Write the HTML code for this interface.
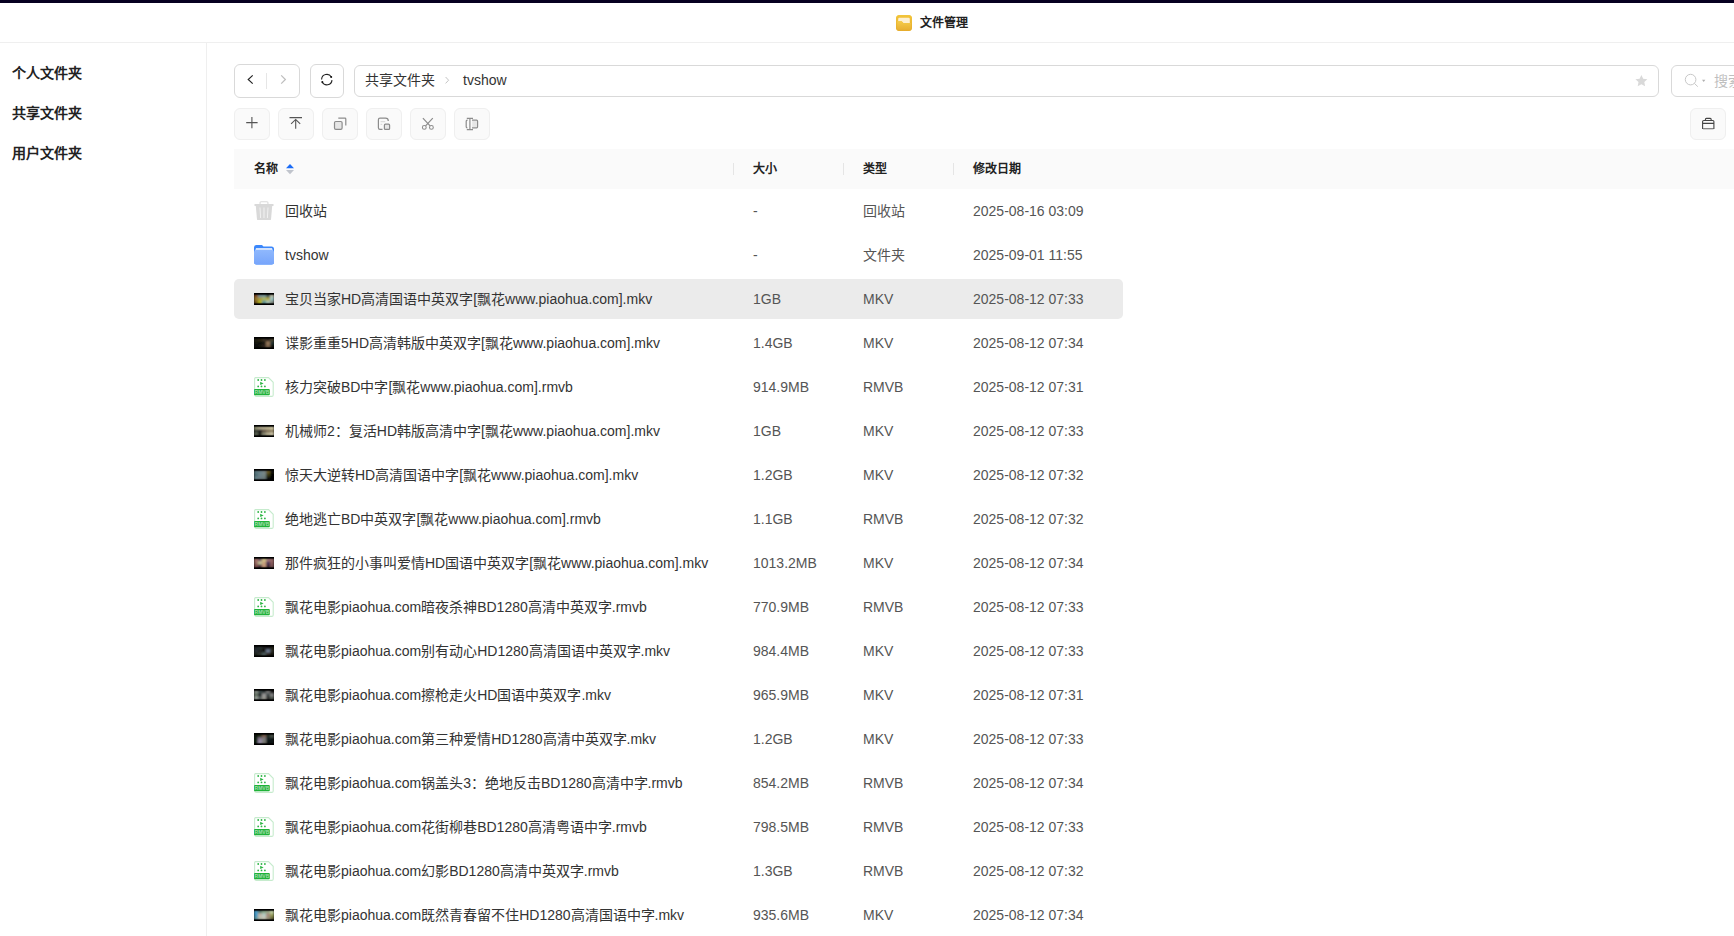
<!DOCTYPE html>
<html lang="zh-CN"><head><meta charset="utf-8">
<style>
*{box-sizing:border-box}
html,body{margin:0;padding:0;width:1734px;height:936px;overflow:hidden;background:#fff;font-family:"Liberation Sans",sans-serif;color:#333}
.abs{position:absolute}
#topbar{left:0;top:0;width:1734px;height:3px;background:#060020}
#title{left:0;top:3px;width:1734px;height:40px;border-bottom:1px solid #efefef}
#title .ico{left:896px;top:12px;width:16px;height:16px;border-radius:4px;background:linear-gradient(#f6cd4f,#e9b22b)}
#title .txt{left:920px;top:12px;font-size:12px;font-weight:bold;color:#222;line-height:16px}
#side{left:0;top:43px;width:207px;height:893px;border-right:1px solid #efefef}
.sitem{left:12px;font-size:14px;font-weight:bold;color:#222;line-height:16px}
.btn{border:1px solid #d9d9d9;border-radius:6px;background:#fff}
.tbtn{top:108px;width:36px;height:32px;border:1px solid #efefef;border-radius:6px;background:#fafafa}
#thead{left:234px;top:149px;width:1500px;height:40px;background:#fafafa}
.th{top:162px;font-size:12px;font-weight:bold;color:#222;line-height:14px}
.sep{top:163px;width:1px;height:12px;background:#e5e5e5}
.row{left:234px;width:889px;height:40px;border-radius:5px}
.c{font-size:14px;line-height:16px;white-space:nowrap}
.nm{left:285px;color:#333}
.sz{left:753px;color:#555}
.ty{left:863px;color:#555}
.dt{left:973px;color:#555}
.ic{left:254px}
</style></head><body>
<div id="topbar" class="abs"></div>
<div id="title" class="abs"><div class="ico abs"></div><div class="txt abs">文件管理</div></div>
<div id="side" class="abs"></div>
<div class="sitem abs" style="top:65px">个人文件夹</div>
<div class="sitem abs" style="top:105px">共享文件夹</div>
<div class="sitem abs" style="top:145px">用户文件夹</div>

<!-- nav -->
<div class="btn abs" style="left:234px;top:64px;width:66px;height:34px"></div>
<div class="btn abs" style="left:310px;top:64px;width:34px;height:34px"></div>
<div class="btn abs" style="left:354px;top:65px;width:1305px;height:32px"></div>
<div class="c abs" style="left:365px;top:72px;color:#333">共享文件夹</div>
<div class="c abs" style="left:463px;top:72px;color:#333">tvshow</div>
<div class="btn abs" style="left:1671px;top:65px;width:100px;height:32px"></div>
<div class="c abs" style="left:1714px;top:73px;color:#bfbfbf">搜索</div>

<div class="tbtn abs" style="left:234px"></div>
<div class="tbtn abs" style="left:278px"></div>
<div class="tbtn abs" style="left:322px"></div>
<div class="tbtn abs" style="left:366px"></div>
<div class="tbtn abs" style="left:410px"></div>
<div class="tbtn abs" style="left:454px"></div>
<div class="tbtn abs" style="left:1690px"></div>

<div id="thead" class="abs"></div>
<div class="th abs" style="left:254px">名称</div>
<div class="sep abs" style="left:733px"></div>
<div class="sep abs" style="left:843px"></div>
<div class="sep abs" style="left:953px"></div>
<div class="th abs" style="left:753px">大小</div>
<div class="th abs" style="left:863px">类型</div>
<div class="th abs" style="left:973px">修改日期</div>

<div class="c abs nm" style="top:203px">回收站</div>
<div class="c abs sz" style="top:203px">-</div>
<div class="c abs ty" style="top:203px">回收站</div>
<div class="c abs dt" style="top:203px">2025-08-16 03:09</div>
<div class="c abs nm" style="top:247px">tvshow</div>
<div class="c abs sz" style="top:247px">-</div>
<div class="c abs ty" style="top:247px">文件夹</div>
<div class="c abs dt" style="top:247px">2025-09-01 11:55</div>
<div class="row abs" style="top:279px;background:#ebebeb"></div>
<div class="c abs nm" style="top:291px">宝贝当家HD高清国语中英双字[飘花www.piaohua.com].mkv</div>
<div class="c abs sz" style="top:291px">1GB</div>
<div class="c abs ty" style="top:291px">MKV</div>
<div class="c abs dt" style="top:291px">2025-08-12 07:33</div>
<div class="c abs nm" style="top:335px">谍影重重5HD高清韩版中英双字[飘花www.piaohua.com].mkv</div>
<div class="c abs sz" style="top:335px">1.4GB</div>
<div class="c abs ty" style="top:335px">MKV</div>
<div class="c abs dt" style="top:335px">2025-08-12 07:34</div>
<div class="c abs nm" style="top:379px">核力突破BD中字[飘花www.piaohua.com].rmvb</div>
<div class="c abs sz" style="top:379px">914.9MB</div>
<div class="c abs ty" style="top:379px">RMVB</div>
<div class="c abs dt" style="top:379px">2025-08-12 07:31</div>
<div class="c abs nm" style="top:423px">机械师2：复活HD韩版高清中字[飘花www.piaohua.com].mkv</div>
<div class="c abs sz" style="top:423px">1GB</div>
<div class="c abs ty" style="top:423px">MKV</div>
<div class="c abs dt" style="top:423px">2025-08-12 07:33</div>
<div class="c abs nm" style="top:467px">惊天大逆转HD高清国语中字[飘花www.piaohua.com].mkv</div>
<div class="c abs sz" style="top:467px">1.2GB</div>
<div class="c abs ty" style="top:467px">MKV</div>
<div class="c abs dt" style="top:467px">2025-08-12 07:32</div>
<div class="c abs nm" style="top:511px">绝地逃亡BD中英双字[飘花www.piaohua.com].rmvb</div>
<div class="c abs sz" style="top:511px">1.1GB</div>
<div class="c abs ty" style="top:511px">RMVB</div>
<div class="c abs dt" style="top:511px">2025-08-12 07:32</div>
<div class="c abs nm" style="top:555px">那件疯狂的小事叫爱情HD国语中英双字[飘花www.piaohua.com].mkv</div>
<div class="c abs sz" style="top:555px">1013.2MB</div>
<div class="c abs ty" style="top:555px">MKV</div>
<div class="c abs dt" style="top:555px">2025-08-12 07:34</div>
<div class="c abs nm" style="top:599px">飘花电影piaohua.com暗夜杀神BD1280高清中英双字.rmvb</div>
<div class="c abs sz" style="top:599px">770.9MB</div>
<div class="c abs ty" style="top:599px">RMVB</div>
<div class="c abs dt" style="top:599px">2025-08-12 07:33</div>
<div class="c abs nm" style="top:643px">飘花电影piaohua.com别有动心HD1280高清国语中英双字.mkv</div>
<div class="c abs sz" style="top:643px">984.4MB</div>
<div class="c abs ty" style="top:643px">MKV</div>
<div class="c abs dt" style="top:643px">2025-08-12 07:33</div>
<div class="c abs nm" style="top:687px">飘花电影piaohua.com擦枪走火HD国语中英双字.mkv</div>
<div class="c abs sz" style="top:687px">965.9MB</div>
<div class="c abs ty" style="top:687px">MKV</div>
<div class="c abs dt" style="top:687px">2025-08-12 07:31</div>
<div class="c abs nm" style="top:731px">飘花电影piaohua.com第三种爱情HD1280高清中英双字.mkv</div>
<div class="c abs sz" style="top:731px">1.2GB</div>
<div class="c abs ty" style="top:731px">MKV</div>
<div class="c abs dt" style="top:731px">2025-08-12 07:33</div>
<div class="c abs nm" style="top:775px">飘花电影piaohua.com锅盖头3：绝地反击BD1280高清中字.rmvb</div>
<div class="c abs sz" style="top:775px">854.2MB</div>
<div class="c abs ty" style="top:775px">RMVB</div>
<div class="c abs dt" style="top:775px">2025-08-12 07:34</div>
<div class="c abs nm" style="top:819px">飘花电影piaohua.com花街柳巷BD1280高清粤语中字.rmvb</div>
<div class="c abs sz" style="top:819px">798.5MB</div>
<div class="c abs ty" style="top:819px">RMVB</div>
<div class="c abs dt" style="top:819px">2025-08-12 07:33</div>
<div class="c abs nm" style="top:863px">飘花电影piaohua.com幻影BD1280高清中英双字.rmvb</div>
<div class="c abs sz" style="top:863px">1.3GB</div>
<div class="c abs ty" style="top:863px">RMVB</div>
<div class="c abs dt" style="top:863px">2025-08-12 07:32</div>
<div class="c abs nm" style="top:907px">飘花电影piaohua.com既然青春留不住HD1280高清国语中字.mkv</div>
<div class="c abs sz" style="top:907px">935.6MB</div>
<div class="c abs ty" style="top:907px">MKV</div>
<div class="c abs dt" style="top:907px">2025-08-12 07:34</div>
<svg class="abs" style="left:0;top:0" width="1734" height="936" viewBox="0 0 1734 936">
<defs>
<filter id="blur" x="-10%" y="-10%" width="120%" height="120%"><feGaussianBlur stdDeviation="1"/></filter>
<linearGradient id="fgrad" x1="0" x2="0" y1="0" y2="1"><stop offset="0" stop-color="#8fb8fd"/><stop offset="1" stop-color="#77a5fb"/></linearGradient>
<linearGradient id="ygrad" x1="0" x2="0" y1="0" y2="1"><stop offset="0" stop-color="#f2c53a"/><stop offset="1" stop-color="#e6ac2c"/></linearGradient>
<linearGradient id="yfront" x1="0" x2="0" y1="0" y2="1"><stop offset="0" stop-color="#f5cc4a"/><stop offset="1" stop-color="#e8b033"/></linearGradient>

</defs>
<!-- title icon -->
<g transform="translate(896,15)">
<rect width="16" height="16" rx="3.5" fill="url(#ygrad)"/>
<path d="M2.2 4 Q2.2 2.8 3.4 2.8 H12.6 Q13.8 2.8 13.8 4 V8 H7.3 L5.7 6.2 H2.2 Z" fill="#fdf0d2"/>
<path d="M1.2 6.2 H5.7 L7.3 8 H14.8 V13.5 Q14.8 14.8 13.5 14.8 H2.5 Q1.2 14.8 1.2 13.5 Z" fill="url(#yfront)"/>
</g>
<!-- nav -->
<path d="M252.7 75.3 L248.2 79.5 L252.7 83.7" fill="none" stroke="#222" stroke-width="1.15"/>
<rect x="266" y="73" width="1" height="16" fill="#e6e6e6"/>
<path d="M281.2 75.3 L285.4 79.5 L281.2 83.7" fill="none" stroke="#bdbdbd" stroke-width="1.2"/>
<!-- refresh -->
<g fill="none" stroke="#222" stroke-width="1.1">
<path d="M321.6 79.4 A5.2 5.2 0 0 1 331.3 77.0"/>
<path d="M332.0 80.1 A5.2 5.2 0 0 1 322.2 82.0"/>
</g>
<circle cx="331.2" cy="77.1" r="1" fill="#111"/>
<circle cx="322.3" cy="82.0" r="1" fill="#111"/>
<!-- breadcrumb sep -->
<path d="M445.6 77 L448.6 80.2 L445.6 83.4" fill="none" stroke="#c4c4c4" stroke-width="1"/>
<!-- star -->
<path d="M1641.4 75 L1643.2 78.8 L1647.4 79.3 L1644.3 82.1 L1645.1 86.3 L1641.4 84.2 L1637.7 86.3 L1638.5 82.1 L1635.4 79.3 L1639.6 78.8 Z" fill="#d9d9d9"/>
<!-- search -->
<circle cx="1690.6" cy="79.6" r="5.3" fill="none" stroke="#c8c8c8" stroke-width="1"/>
<path d="M1694.4 83.4 L1697.8 86.7" stroke="#c8c8c8" stroke-width="1"/>
<path d="M1702 79.8 H1705.4 L1703.7 81.9 Z" fill="#b0b0b0"/>
<!-- toolbar icons -->
<path d="M251.9 117 V128.2 M246.2 122.6 H257.6" stroke="#555" stroke-width="1.1"/>
<path d="M289.5 117.6 H302 M295.7 119.6 V128.8 M291.1 123.8 L295.7 119.4 L300.2 123.8" fill="none" stroke="#555" stroke-width="1.1"/>
<g stroke="#8c8c8c" stroke-width="1.2" fill="none">
<path d="M338.3 118.2 H345 Q345.8 118.2 345.8 119 V125.6"/>
<rect x="334.5" y="121.5" width="7.6" height="7.8" rx="1.3" fill="#e6e6e6"/>
<path d="M382.5 129.4 H380 Q378.4 129.4 378.4 127.8 V119.8 Q378.4 118.2 380 118.2 H385.5 Q388.3 118.2 388.3 121"/>
<rect x="384.4" y="124.2" width="5.2" height="5.2" rx="1" fill="#e6e6e6"/>
<path d="M380.6 121.6 H385.2 M380.6 124.3 H382.2" stroke="#ddd"/>
<path d="M422.9 118.1 L430.1 125.9 M432.8 118.1 L425.6 125.9"/>
<circle cx="424.3" cy="127.4" r="1.9" stroke-width="1.05"/>
<circle cx="431.4" cy="127.4" r="1.9" stroke-width="1.05"/>
<path d="M467.4 127.8 H467.2 Q466.2 127.8 466.2 126.8 V121.2 Q466.2 120.2 467.2 120.2 H467.6 M472 120.2 H476.6 Q477.6 120.2 477.6 121.2 V126.8 Q477.6 127.8 476.6 127.8 H472"/>
<rect x="472.2" y="121" width="4.8" height="6" fill="#e6e6e6" stroke="none"/>
<path d="M469.9 118.4 V129.6 M466.8 118.4 H473 M466.8 129.6 H473"/>
<path d="M1702.6 128.5 V121.6 Q1702.6 120.5 1703.7 120.5 H1712.8 Q1713.9 120.5 1713.9 121.6 V128.5 Z M1702.6 123.4 H1713.9 M1705.4 120.5 V119.4 Q1705.4 118.4 1706.4 118.4 H1710.2 Q1711.2 118.4 1711.2 119.4 V120.5" stroke="#444" stroke-width="1.1"/>
<path d="M1703 128.8 H1713.5" stroke="#999" stroke-width="1.2"/>
</g>
<!-- sort -->
<path d="M286 168.2 L290 164 L294 168.2 Z" fill="#1c6cf6"/>
<path d="M286 170 L290 174.2 L294 170 Z" fill="#c0c4cc"/>
<g transform="translate(254,201)">
<rect x="6" y="0.8" width="8" height="2.8" rx="1" fill="none" stroke="#dcdcdc" stroke-width="1.1"/>
<rect x="0.5" y="3" width="19" height="2" fill="#d9d9d9"/>
<path d="M1.8 5 H18.2 L17 18.6 Q16.8 19.1 16 19.1 H4 Q3.2 19.1 3 18.6 Z" fill="#d9d9d9"/>
<path d="M6 6.5 L6.6 17 M10 6.5 V17 M14 6.5 L13.4 17" stroke="#f2f2f2" stroke-width="1"/>
</g><g transform="translate(254,245)">
<path d="M0 2.5 Q0 0 2.5 0 H8 L9.5 1.5 H17.5 Q20 1.5 20 4 V17 Q20 19.5 17.5 19.5 H2.5 Q0 19.5 0 17 Z" fill="#3b87fb"/>
<path d="M2 3 H18 L19 6 H1 Z" fill="#d2e2fd"/>
<rect x="0" y="5" width="20" height="14.5" rx="2.2" fill="url(#fgrad)"/>
</g><g transform="translate(254,293)"><rect width="20" height="12" fill="#000"/><svg x="0" y="1.5" width="20" height="9" viewBox="0 1.5 20 9" overflow="hidden"><g filter="url(#blur)"><rect x="0" y="1.5" width="4.2" height="3.2" fill="#8a5020"/><rect x="4" y="1.5" width="4.2" height="3.2" fill="#7a98a0"/><rect x="8" y="1.5" width="4.2" height="3.2" fill="#80a0a0"/><rect x="12" y="1.5" width="4.2" height="3.2" fill="#405858"/><rect x="16" y="1.5" width="4.2" height="3.2" fill="#c8c8b0"/><rect x="0" y="4.5" width="4.2" height="3.2" fill="#a08030"/><rect x="4" y="4.5" width="4.2" height="3.2" fill="#b0a040"/><rect x="8" y="4.5" width="4.2" height="3.2" fill="#b8c060"/><rect x="12" y="4.5" width="4.2" height="3.2" fill="#c0b040"/><rect x="16" y="4.5" width="4.2" height="3.2" fill="#a0d0d0"/><rect x="0" y="7.5" width="4.2" height="3.2" fill="#806020"/><rect x="4" y="7.5" width="4.2" height="3.2" fill="#c0c020"/><rect x="8" y="7.5" width="4.2" height="3.2" fill="#60a0a0"/><rect x="12" y="7.5" width="4.2" height="3.2" fill="#b0d0c0"/><rect x="16" y="7.5" width="4.2" height="3.2" fill="#909890"/></g></svg></g><g transform="translate(254,337)"><rect width="20" height="12" fill="#000"/><svg x="0" y="1.5" width="20" height="9" viewBox="0 1.5 20 9" overflow="hidden"><g filter="url(#blur)"><rect x="0" y="1.5" width="4.2" height="3.2" fill="#202018"/><rect x="4" y="1.5" width="4.2" height="3.2" fill="#302818"/><rect x="8" y="1.5" width="4.2" height="3.2" fill="#403828"/><rect x="12" y="1.5" width="4.2" height="3.2" fill="#302820"/><rect x="16" y="1.5" width="4.2" height="3.2" fill="#504830"/><rect x="0" y="4.5" width="4.2" height="3.2" fill="#181510"/><rect x="4" y="4.5" width="4.2" height="3.2" fill="#101010"/><rect x="8" y="4.5" width="4.2" height="3.2" fill="#181810"/><rect x="12" y="4.5" width="4.2" height="3.2" fill="#a08060"/><rect x="16" y="4.5" width="4.2" height="3.2" fill="#203838"/><rect x="0" y="7.5" width="4.2" height="3.2" fill="#100c08"/><rect x="4" y="7.5" width="4.2" height="3.2" fill="#181810"/><rect x="8" y="7.5" width="4.2" height="3.2" fill="#302820"/><rect x="12" y="7.5" width="4.2" height="3.2" fill="#806850"/><rect x="16" y="7.5" width="4.2" height="3.2" fill="#181810"/></g></svg></g><g transform="translate(254,377)">
<path d="M1.5 0.6 H14.5 L19.2 5.3 V18 Q19.2 19.4 17.8 19.4 H2.5 Q0.6 19.4 0.6 17.5 V2.5 Q0.6 0.6 1.5 0.6 Z" fill="#fff" stroke="#c6ebcd" stroke-width="1.1"/>
<g fill="#2cb544"><circle cx="4.2" cy="3" r="0.9"/><circle cx="7.5" cy="3" r="0.9"/><circle cx="10.9" cy="3" r="0.9"/>
<circle cx="4.2" cy="9.4" r="0.9"/><circle cx="7.5" cy="9.4" r="0.9"/><circle cx="10.9" cy="9.4" r="0.9"/>
<path d="M6.2 4.8 L9.6 6.4 L6.2 8 Z"/></g>
<rect x="0" y="12" width="15.8" height="6.2" rx="1" fill="#1fb238"/>
<text x="7.9" y="17" font-family="Liberation Sans" font-size="5" font-weight="bold" fill="#9fdcaa" text-anchor="middle">RMVB</text>
</g><g transform="translate(254,425)"><rect width="20" height="12" fill="#000"/><svg x="0" y="1.5" width="20" height="9" viewBox="0 1.5 20 9" overflow="hidden"><g filter="url(#blur)"><rect x="0" y="1.5" width="4.2" height="3.2" fill="#a0a080"/><rect x="4" y="1.5" width="4.2" height="3.2" fill="#c0b898"/><rect x="8" y="1.5" width="4.2" height="3.2" fill="#c8c0a0"/><rect x="12" y="1.5" width="4.2" height="3.2" fill="#d0c8a0"/><rect x="16" y="1.5" width="4.2" height="3.2" fill="#e0d8b0"/><rect x="0" y="4.5" width="4.2" height="3.2" fill="#303830"/><rect x="4" y="4.5" width="4.2" height="3.2" fill="#202020"/><rect x="8" y="4.5" width="4.2" height="3.2" fill="#605040"/><rect x="12" y="4.5" width="4.2" height="3.2" fill="#807058"/><rect x="16" y="4.5" width="4.2" height="3.2" fill="#908060"/><rect x="0" y="7.5" width="4.2" height="3.2" fill="#606858"/><rect x="4" y="7.5" width="4.2" height="3.2" fill="#202018"/><rect x="8" y="7.5" width="4.2" height="3.2" fill="#909078"/><rect x="12" y="7.5" width="4.2" height="3.2" fill="#c0b898"/><rect x="16" y="7.5" width="4.2" height="3.2" fill="#d8d0b0"/></g></svg></g><g transform="translate(254,469)"><rect width="20" height="12" fill="#000"/><svg x="0" y="1.5" width="20" height="9" viewBox="0 1.5 20 9" overflow="hidden"><g filter="url(#blur)"><rect x="0" y="1.5" width="4.2" height="3.2" fill="#608088"/><rect x="4" y="1.5" width="4.2" height="3.2" fill="#708890"/><rect x="8" y="1.5" width="4.2" height="3.2" fill="#808e90"/><rect x="12" y="1.5" width="4.2" height="3.2" fill="#706028"/><rect x="16" y="1.5" width="4.2" height="3.2" fill="#101008"/><rect x="0" y="4.5" width="4.2" height="3.2" fill="#507078"/><rect x="4" y="4.5" width="4.2" height="3.2" fill="#708890"/><rect x="8" y="4.5" width="4.2" height="3.2" fill="#7a8a88"/><rect x="12" y="4.5" width="4.2" height="3.2" fill="#404018"/><rect x="16" y="4.5" width="4.2" height="3.2" fill="#050505"/><rect x="0" y="7.5" width="4.2" height="3.2" fill="#6a8890"/><rect x="4" y="7.5" width="4.2" height="3.2" fill="#708088"/><rect x="8" y="7.5" width="4.2" height="3.2" fill="#708080"/><rect x="12" y="7.5" width="4.2" height="3.2" fill="#101010"/><rect x="16" y="7.5" width="4.2" height="3.2" fill="#050505"/></g></svg></g><g transform="translate(254,509)">
<path d="M1.5 0.6 H14.5 L19.2 5.3 V18 Q19.2 19.4 17.8 19.4 H2.5 Q0.6 19.4 0.6 17.5 V2.5 Q0.6 0.6 1.5 0.6 Z" fill="#fff" stroke="#c6ebcd" stroke-width="1.1"/>
<g fill="#2cb544"><circle cx="4.2" cy="3" r="0.9"/><circle cx="7.5" cy="3" r="0.9"/><circle cx="10.9" cy="3" r="0.9"/>
<circle cx="4.2" cy="9.4" r="0.9"/><circle cx="7.5" cy="9.4" r="0.9"/><circle cx="10.9" cy="9.4" r="0.9"/>
<path d="M6.2 4.8 L9.6 6.4 L6.2 8 Z"/></g>
<rect x="0" y="12" width="15.8" height="6.2" rx="1" fill="#1fb238"/>
<text x="7.9" y="17" font-family="Liberation Sans" font-size="5" font-weight="bold" fill="#9fdcaa" text-anchor="middle">RMVB</text>
</g><g transform="translate(254,557)"><rect width="20" height="12" fill="#000"/><svg x="0" y="1.5" width="20" height="9" viewBox="0 1.5 20 9" overflow="hidden"><g filter="url(#blur)"><rect x="0" y="1.5" width="4.2" height="3.2" fill="#b07870"/><rect x="4" y="1.5" width="4.2" height="3.2" fill="#806070"/><rect x="8" y="1.5" width="4.2" height="3.2" fill="#e0d090"/><rect x="12" y="1.5" width="4.2" height="3.2" fill="#b08080"/><rect x="16" y="1.5" width="4.2" height="3.2" fill="#a07070"/><rect x="0" y="4.5" width="4.2" height="3.2" fill="#a07068"/><rect x="4" y="4.5" width="4.2" height="3.2" fill="#d0d0a0"/><rect x="8" y="4.5" width="4.2" height="3.2" fill="#d0a880"/><rect x="12" y="4.5" width="4.2" height="3.2" fill="#503860"/><rect x="16" y="4.5" width="4.2" height="3.2" fill="#906060"/><rect x="0" y="7.5" width="4.2" height="3.2" fill="#805050"/><rect x="4" y="7.5" width="4.2" height="3.2" fill="#503040"/><rect x="8" y="7.5" width="4.2" height="3.2" fill="#d0a080"/><rect x="12" y="7.5" width="4.2" height="3.2" fill="#402838"/><rect x="16" y="7.5" width="4.2" height="3.2" fill="#805858"/></g></svg></g><g transform="translate(254,597)">
<path d="M1.5 0.6 H14.5 L19.2 5.3 V18 Q19.2 19.4 17.8 19.4 H2.5 Q0.6 19.4 0.6 17.5 V2.5 Q0.6 0.6 1.5 0.6 Z" fill="#fff" stroke="#c6ebcd" stroke-width="1.1"/>
<g fill="#2cb544"><circle cx="4.2" cy="3" r="0.9"/><circle cx="7.5" cy="3" r="0.9"/><circle cx="10.9" cy="3" r="0.9"/>
<circle cx="4.2" cy="9.4" r="0.9"/><circle cx="7.5" cy="9.4" r="0.9"/><circle cx="10.9" cy="9.4" r="0.9"/>
<path d="M6.2 4.8 L9.6 6.4 L6.2 8 Z"/></g>
<rect x="0" y="12" width="15.8" height="6.2" rx="1" fill="#1fb238"/>
<text x="7.9" y="17" font-family="Liberation Sans" font-size="5" font-weight="bold" fill="#9fdcaa" text-anchor="middle">RMVB</text>
</g><g transform="translate(254,645)"><rect width="20" height="12" fill="#000"/><svg x="0" y="1.5" width="20" height="9" viewBox="0 1.5 20 9" overflow="hidden"><g filter="url(#blur)"><rect x="0" y="1.5" width="4.2" height="3.2" fill="#202828"/><rect x="4" y="1.5" width="4.2" height="3.2" fill="#283030"/><rect x="8" y="1.5" width="4.2" height="3.2" fill="#202420"/><rect x="12" y="1.5" width="4.2" height="3.2" fill="#181818"/><rect x="16" y="1.5" width="4.2" height="3.2" fill="#202018"/><rect x="0" y="4.5" width="4.2" height="3.2" fill="#283038"/><rect x="4" y="4.5" width="4.2" height="3.2" fill="#202420"/><rect x="8" y="4.5" width="4.2" height="3.2" fill="#101010"/><rect x="12" y="4.5" width="4.2" height="3.2" fill="#7888a0"/><rect x="16" y="4.5" width="4.2" height="3.2" fill="#303028"/><rect x="0" y="7.5" width="4.2" height="3.2" fill="#202820"/><rect x="4" y="7.5" width="4.2" height="3.2" fill="#303830"/><rect x="8" y="7.5" width="4.2" height="3.2" fill="#506060"/><rect x="12" y="7.5" width="4.2" height="3.2" fill="#302820"/><rect x="16" y="7.5" width="4.2" height="3.2" fill="#181810"/></g></svg></g><g transform="translate(254,689)"><rect width="20" height="12" fill="#000"/><svg x="0" y="1.5" width="20" height="9" viewBox="0 1.5 20 9" overflow="hidden"><g filter="url(#blur)"><rect x="0" y="1.5" width="4.2" height="3.2" fill="#909890"/><rect x="4" y="1.5" width="4.2" height="3.2" fill="#405050"/><rect x="8" y="1.5" width="4.2" height="3.2" fill="#303838"/><rect x="12" y="1.5" width="4.2" height="3.2" fill="#808080"/><rect x="16" y="1.5" width="4.2" height="3.2" fill="#101010"/><rect x="0" y="4.5" width="4.2" height="3.2" fill="#607060"/><rect x="4" y="4.5" width="4.2" height="3.2" fill="#202828"/><rect x="8" y="4.5" width="4.2" height="3.2" fill="#a0a0a0"/><rect x="12" y="4.5" width="4.2" height="3.2" fill="#404848"/><rect x="16" y="4.5" width="4.2" height="3.2" fill="#909090"/><rect x="0" y="7.5" width="4.2" height="3.2" fill="#a0a8a0"/><rect x="4" y="7.5" width="4.2" height="3.2" fill="#606868"/><rect x="8" y="7.5" width="4.2" height="3.2" fill="#a0a098"/><rect x="12" y="7.5" width="4.2" height="3.2" fill="#303030"/><rect x="16" y="7.5" width="4.2" height="3.2" fill="#505850"/></g></svg></g><g transform="translate(254,733)"><rect width="20" height="12" fill="#000"/><svg x="0" y="1.5" width="20" height="9" viewBox="0 1.5 20 9" overflow="hidden"><g filter="url(#blur)"><rect x="0" y="1.5" width="4.2" height="3.2" fill="#101808"/><rect x="4" y="1.5" width="4.2" height="3.2" fill="#203010"/><rect x="8" y="1.5" width="4.2" height="3.2" fill="#806050"/><rect x="12" y="1.5" width="4.2" height="3.2" fill="#203028"/><rect x="16" y="1.5" width="4.2" height="3.2" fill="#505850"/><rect x="0" y="4.5" width="4.2" height="3.2" fill="#102010"/><rect x="4" y="4.5" width="4.2" height="3.2" fill="#908098"/><rect x="8" y="4.5" width="4.2" height="3.2" fill="#808080"/><rect x="12" y="4.5" width="4.2" height="3.2" fill="#182020"/><rect x="16" y="4.5" width="4.2" height="3.2" fill="#101818"/><rect x="0" y="7.5" width="4.2" height="3.2" fill="#102010"/><rect x="4" y="7.5" width="4.2" height="3.2" fill="#a098b0"/><rect x="8" y="7.5" width="4.2" height="3.2" fill="#808078"/><rect x="12" y="7.5" width="4.2" height="3.2" fill="#101818"/><rect x="16" y="7.5" width="4.2" height="3.2" fill="#101818"/></g></svg></g><g transform="translate(254,773)">
<path d="M1.5 0.6 H14.5 L19.2 5.3 V18 Q19.2 19.4 17.8 19.4 H2.5 Q0.6 19.4 0.6 17.5 V2.5 Q0.6 0.6 1.5 0.6 Z" fill="#fff" stroke="#c6ebcd" stroke-width="1.1"/>
<g fill="#2cb544"><circle cx="4.2" cy="3" r="0.9"/><circle cx="7.5" cy="3" r="0.9"/><circle cx="10.9" cy="3" r="0.9"/>
<circle cx="4.2" cy="9.4" r="0.9"/><circle cx="7.5" cy="9.4" r="0.9"/><circle cx="10.9" cy="9.4" r="0.9"/>
<path d="M6.2 4.8 L9.6 6.4 L6.2 8 Z"/></g>
<rect x="0" y="12" width="15.8" height="6.2" rx="1" fill="#1fb238"/>
<text x="7.9" y="17" font-family="Liberation Sans" font-size="5" font-weight="bold" fill="#9fdcaa" text-anchor="middle">RMVB</text>
</g><g transform="translate(254,817)">
<path d="M1.5 0.6 H14.5 L19.2 5.3 V18 Q19.2 19.4 17.8 19.4 H2.5 Q0.6 19.4 0.6 17.5 V2.5 Q0.6 0.6 1.5 0.6 Z" fill="#fff" stroke="#c6ebcd" stroke-width="1.1"/>
<g fill="#2cb544"><circle cx="4.2" cy="3" r="0.9"/><circle cx="7.5" cy="3" r="0.9"/><circle cx="10.9" cy="3" r="0.9"/>
<circle cx="4.2" cy="9.4" r="0.9"/><circle cx="7.5" cy="9.4" r="0.9"/><circle cx="10.9" cy="9.4" r="0.9"/>
<path d="M6.2 4.8 L9.6 6.4 L6.2 8 Z"/></g>
<rect x="0" y="12" width="15.8" height="6.2" rx="1" fill="#1fb238"/>
<text x="7.9" y="17" font-family="Liberation Sans" font-size="5" font-weight="bold" fill="#9fdcaa" text-anchor="middle">RMVB</text>
</g><g transform="translate(254,861)">
<path d="M1.5 0.6 H14.5 L19.2 5.3 V18 Q19.2 19.4 17.8 19.4 H2.5 Q0.6 19.4 0.6 17.5 V2.5 Q0.6 0.6 1.5 0.6 Z" fill="#fff" stroke="#c6ebcd" stroke-width="1.1"/>
<g fill="#2cb544"><circle cx="4.2" cy="3" r="0.9"/><circle cx="7.5" cy="3" r="0.9"/><circle cx="10.9" cy="3" r="0.9"/>
<circle cx="4.2" cy="9.4" r="0.9"/><circle cx="7.5" cy="9.4" r="0.9"/><circle cx="10.9" cy="9.4" r="0.9"/>
<path d="M6.2 4.8 L9.6 6.4 L6.2 8 Z"/></g>
<rect x="0" y="12" width="15.8" height="6.2" rx="1" fill="#1fb238"/>
<text x="7.9" y="17" font-family="Liberation Sans" font-size="5" font-weight="bold" fill="#9fdcaa" text-anchor="middle">RMVB</text>
</g><g transform="translate(254,909)"><rect width="20" height="12" fill="#000"/><svg x="0" y="1.5" width="20" height="9" viewBox="0 1.5 20 9" overflow="hidden"><g filter="url(#blur)"><rect x="0" y="1.5" width="4.2" height="3.2" fill="#50a8d8"/><rect x="4" y="1.5" width="4.2" height="3.2" fill="#608878"/><rect x="8" y="1.5" width="4.2" height="3.2" fill="#90b090"/><rect x="12" y="1.5" width="4.2" height="3.2" fill="#a0b090"/><rect x="16" y="1.5" width="4.2" height="3.2" fill="#d0e0b0"/><rect x="0" y="4.5" width="4.2" height="3.2" fill="#40a0d0"/><rect x="4" y="4.5" width="4.2" height="3.2" fill="#d0c0b0"/><rect x="8" y="4.5" width="4.2" height="3.2" fill="#c0d8d0"/><rect x="12" y="4.5" width="4.2" height="3.2" fill="#b09080"/><rect x="16" y="4.5" width="4.2" height="3.2" fill="#a0a860"/><rect x="0" y="7.5" width="4.2" height="3.2" fill="#60a0b0"/><rect x="4" y="7.5" width="4.2" height="3.2" fill="#c0c8b8"/><rect x="8" y="7.5" width="4.2" height="3.2" fill="#d0d0c0"/><rect x="12" y="7.5" width="4.2" height="3.2" fill="#a09880"/><rect x="16" y="7.5" width="4.2" height="3.2" fill="#707040"/></g></svg></g>
</svg>
</body></html>
